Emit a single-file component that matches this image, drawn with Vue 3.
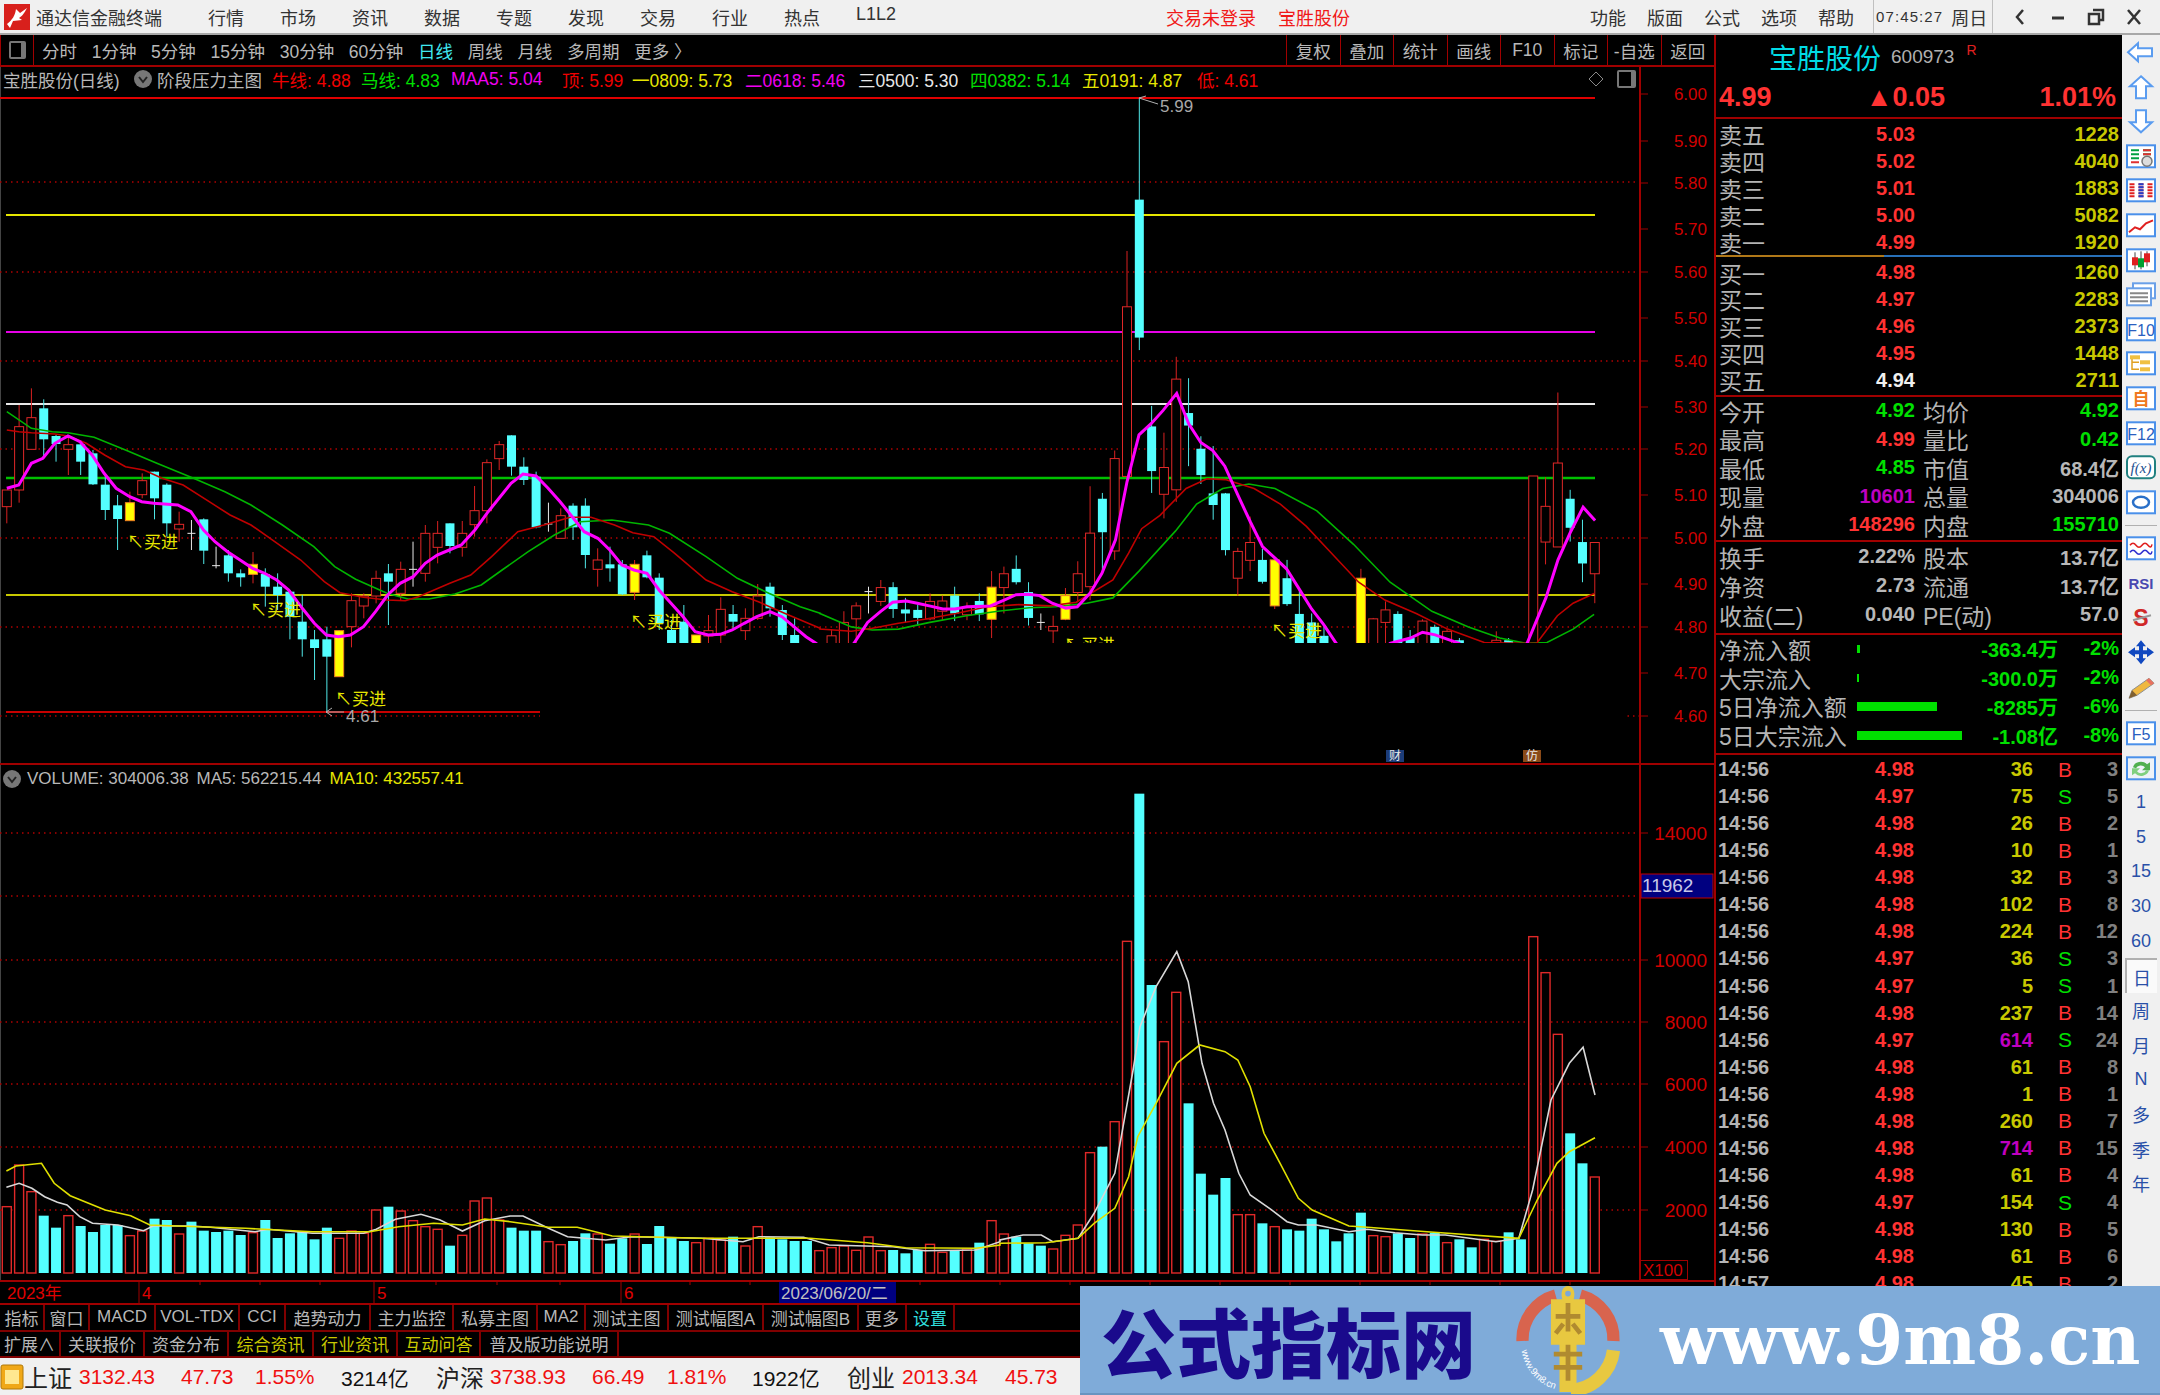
<script setup>
// horizontal pitch of the daily bars
const barX = (i) => 6.8 + 12.31 * i;

// traces were read off two crops, these put them back on the page
const a = (x, y) => [x / 1.912, 360 + y / 3];
const b = (x, y) => [820 + x / 1.912, 80 + y / 2.24];
const ay = (y) => 360 + y / 3;
const by = (y) => 80 + y / 2.24;

// [index, kind, high, top, bottom, low]
const candlesA = [
  [0,"r",390,390,440,490],[1,"r",135,200,390,428],[2,"r",85,173,268,268],[3,"c",118,145,238,290],
  [4,"c",225,228,252,305],[5,"r",225,254,268,345],[6,"c",240,253,305,345],[7,"c",270,280,373,375],
  [8,"c",340,374,450,480],[9,"c",405,436,477,570],[10,"y",395,428,482,482],[11,"r",340,362,404,415],
  [12,"c",335,335,415,478],[13,"c",370,374,490,530],[14,"r",455,493,507,545],[15,"w",480,520,520,570],
  [16,"c",475,478,572,612],[17,"w",560,617,617,625],[18,"c",570,586,640,665],[19,"c",628,640,652,680],
  [20,"y",576,613,643,670],[21,"c",625,642,680,740],[22,"c",640,680,705,750],[23,"c",690,695,770,838],
  [24,"c",705,785,838,890],[25,"c",810,838,864,960],[26,"c",800,838,890,1055],[27,"y",810,812,950,950],
  [28,"r",700,722,800,862],[29,"r",700,708,738,775],[30,"r",632,655,708,730],[31,"c",612,640,665,795],
  [32,"r",605,628,700,720],[33,"w",545,628,628,680],[34,"r",495,520,640,665],[35,"r",483,520,562,610],
  [36,"c",490,490,558,580],[37,"r",483,520,562,590],[38,"r",378,452,494,530],[39,"r",298,308,452,490],
  [40,"r",243,254,296,330],[41,"c",226,226,320,347],[42,"c",292,320,360,375],[43,"c",335,350,502,505],
  [44,"w",428,492,492,515],[45,"r",445,467,535,535],[46,"c",430,437,502,540],[47,"c",415,437,585,625],
  [48,"r",565,600,628,680],[49,"c",560,613,625,665],[50,"c",600,613,703,705],[51,"y",600,613,697,720],
  [52,"c",572,586,652,655],[53,"c",640,653,790,810],[54,"c",780,810,870,890],[55,"c",735,785,870,890],
  [56,"y",825,825,870,890],[57,"r",765,812,828,870],[58,"r",712,748,825,870],[59,"c",735,762,785,810],
  [60,"r",745,775,812,840],[61,"r",672,708,775,780],[62,"c",668,680,745,770],[63,"c",735,750,825,840],
  [64,"c",775,825,870,890],
];
const candlesB = [
  [67,"r",1230,1245,1280,1290],[68,"r",1190,1215,1280,1290],[69,"r",1170,1178,1207,1280],[70,"w",1135,1146,1146,1195],
  [71,"r",1120,1137,1168,1178],[72,"c",1125,1136,1185,1205],[73,"c",1160,1186,1195,1215],[74,"c",1175,1187,1205,1222],
  [75,"r",1150,1168,1207,1210],[76,"r",1155,1167,1190,1210],[77,"c",1135,1155,1195,1212],[78,"r",1170,1182,1198,1210],
  [79,"c",1150,1167,1197,1212],[80,"y",1100,1136,1208,1250],[81,"r",1090,1106,1137,1195],[82,"c",1065,1095,1125,1130],
  [83,"c",1125,1147,1205,1222],[84,"w",1195,1215,1215,1232],[85,"r",1200,1224,1234,1280],[86,"y",1138,1155,1208,1210],
  [87,"r",1078,1106,1148,1170],[88,"r",910,1015,1135,1165],[89,"c",925,938,1013,1100],[90,"r",830,848,1055,1075],
  [91,"r",383,508,888,888],[92,"c",40,268,577,605],[93,"c",730,776,876,925],[94,"r",790,868,928,982],
  [95,"r",620,670,918,945],[96,"c",668,746,774,865],[97,"c",798,826,885,905],[98,"c",820,926,952,985],
  [99,"c",925,926,1053,1065],[100,"r",1048,1056,1116,1155],[101,"r",978,1036,1076,1100],[102,"c",1050,1075,1124,1128],
  [103,"y",1075,1075,1178,1185],[104,"c",1075,1116,1174,1178],[105,"c",1140,1196,1290,1295],[106,"c",1195,1215,1290,1295],
  [107,"c",1225,1245,1290,1295],[110,"y",1095,1116,1290,1295],[111,"r",1205,1207,1290,1295],[112,"r",1168,1187,1215,1290],
  [113,"c",1190,1196,1290,1295],[114,"c",1232,1250,1290,1295],[115,"r",1208,1212,1290,1295],[116,"c",1220,1225,1290,1295],
  [117,"r",1230,1235,1290,1295],[118,"c",1250,1255,1290,1295],[121,"r",1235,1255,1290,1295],[122,"c",1250,1255,1290,1295],
  [124,"r",887,887,1290,1295],[125,"r",890,955,1035,1085],[126,"r",700,858,1046,1046],[127,"c",918,938,1003,1034],
  [128,"c",985,1035,1083,1125],[129,"r",1036,1036,1106,1172],
];
const candles = [
  ...candlesA.map(([i, k, h, t, bt, l]) => ({ i, k, h: ay(h), t: ay(t), b: ay(bt), l: ay(l), x: barX(i) })),
  ...candlesB.map(([i, k, h, t, bt, l]) => ({ i, k, h: by(h), t: by(t), b: by(bt), l: by(l), x: barX(i) })),
];

const poly = (list) => list.map((p) => p.map((n) => n.toFixed(1)).join(",")).join(" ");
const tr = (fn, nums) => {
  const out = [];
  for (let i = 0; i < nums.length; i += 2) out.push(fn(nums[i], nums[i + 1]));
  return out;
};

const magenta = poly([
  ...tr(a, [13,385,36,375,60,310,82,295,105,250,130,228,153,245,176,285,199,340,222,385,248,410,271,425,294,430,340,435,365,455,389,510,411,545,435,575,459,600,483,625,506,640,529,660,552,690,578,745,601,790,624,825,647,830,670,825,695,800,718,755,741,705,765,670,790,650,813,610,836,585,859,570,882,555,908,510,931,460,954,415,977,370,1000,342,1025,348,1048,385,1071,425,1094,470,1117,515,1143,535,1166,570,1189,615,1212,630,1237,640,1260,690,1283,730,1306,770,1329,815,1354,825,1377,823,1400,810,1423,790,1447,770,1472,755,1495,770,1518,800,1541,830,1560,850]),
  ...tr(b, [30,1300,65,1262,91,1215,116,1190,139,1170,165,1167,186,1172,209,1178,235,1185,258,1185,281,1180,326,1178,352,1165,375,1153,398,1152,420,1155,444,1172,470,1183,492,1180,516,1150,539,1105,565,1030,587,900,610,795,633,770,656,740,682,702,705,770,728,812,751,830,774,865,799,930,823,990,846,1045,869,1070,892,1095,916,1140,940,1185,963,1220,987,1262,1040,1320,1090,1262,1129,1250,1152,1237,1176,1243,1222,1262,1290,1320,1352,1262,1388,1160,1411,1075,1434,1015,1459,957,1482,987]),
]);
const maRed = poly([
  ...tr(a, [13,210,36,215,60,218,105,222,130,228,165,250,200,285,240,320,275,330,310,355,350,375,400,425,440,465,480,495,530,550,575,600,620,665,650,698,695,712,740,720,775,722,800,710,860,670,900,645,940,590,990,515,1040,495,1090,472,1130,472,1175,495,1210,518,1250,530,1290,580,1350,660,1400,695,1450,725,1500,760,1568,805]),
  ...tr(b, [0,1230,60,1235,100,1228,150,1217,200,1208,260,1195,320,1180,380,1175,440,1178,490,1170,560,1120,590,1060,615,1005,650,975,700,915,740,893,775,895,830,915,880,950,930,1000,970,1050,1030,1125,1080,1165,1140,1195,1200,1230,1270,1260,1340,1262,1370,1262,1410,1200,1440,1172,1480,1150]),
]);
const maGreen = poly([
  ...tr(a, [13,155,60,205,100,215,130,218,180,232,240,270,300,310,370,355,430,395,480,435,540,495,600,560,640,620,680,658,740,700,780,717,820,717,870,702,920,675,960,630,1010,575,1060,525,1110,485,1170,480,1240,495,1280,520,1350,590,1410,655,1470,700,1530,740,1568,760]),
  ...tr(b, [0,1195,60,1225,100,1232,150,1230,210,1215,280,1200,340,1190,400,1182,450,1180,510,1172,560,1160,610,1100,680,1010,720,950,770,915,820,905,870,915,950,965,1020,1040,1090,1125,1170,1190,1240,1225,1300,1250,1350,1262,1390,1260,1440,1230,1480,1197]),
]);

const levels = [
  { y: 98, x2: 1595, color: "#e00000", w: 2 },
  { y: 215, x2: 1595, color: "#e6e600", w: 2 },
  { y: 332, x2: 1595, color: "#e600e6", w: 2 },
  { y: 404, x2: 1595, color: "#e8e8e8", w: 2 },
  { y: 478, x2: 1595, color: "#00c000", w: 2.5 },
  { y: 595, x2: 1595, color: "#c8c800", w: 2 },
  { y: 712, x2: 540, color: "#c80000", w: 2 },
];
const priceGrid = [182, 272, 361, 449, 538, 627];
const priceAxis = [
  ["6.00", 94], ["5.90", 141], ["5.80", 183], ["5.70", 229], ["5.60", 272],
  ["5.50", 318], ["5.40", 361], ["5.30", 407], ["5.20", 449], ["5.10", 495],
  ["5.00", 538], ["4.90", 584], ["4.80", 627], ["4.70", 673], ["4.60", 716],
];
const buySigns = [[127, 542], [250, 610], [335, 699], [630, 622], [1271, 631], [1064, 645]];

// volume bars, top of each bar from the crops
const volA = "r1310 r1185 r1265 c1337 c1373 r1337 c1368 c1386 c1365 c1365 r1397 r1383 c1346 c1350 r1392 c1355 c1382 c1386 c1382 c1395 r1388 c1350 c1404 c1390 c1385 c1408 c1373 r1405 r1383 r1390 r1320 c1310 r1323 r1352 r1370 r1378 c1427 r1396 r1293 r1284 r1350 c1373 c1382 c1382 r1415 r1424 c1413 c1390 r1392 c1421 c1405 r1392 c1422 c1368 c1402 c1413 r1418 r1405 r1410 c1400 r1428 r1370 c1402 c1408 c1413 c1413 r1442 r1433 r1428 r1441 r1401 r1442 c1440 c1450 c1440 r1423 r1447 c1440 r1437 c1418 r1352";
const volB = "r1392 c1400 c1420 c1427 r1437 r1396 r1365 r1148 c1130 r1055 r514 c71 c645 r815 r667 c1000 c1211 c1274 c1224 r1334 r1334 c1360 r1370 c1378 c1382 c1346 c1378 c1414 c1390 c1328 r1397 r1400 c1390 c1404 r1392 c1388 r1418 c1408 c1432 r1408 r1414 c1387 c1408 r500 r608 r793 c1090 c1180 r1221";
const volBars = (volA + " " + volB).split(" ").map((s, i) => ({
  x: barX(i),
  k: s[0],
  top: 770 + Number(s.slice(1)) / 3,
}));
const volBase = 1273;
const c = (x, y) => [x / 1.568, 770 + y / 3];
const d = (x, y) => [1000 + x / 2.178, 770 + y / 3];
const volWhite = poly([
  ...tr(c, [10,1252,30,1240,50,1255,70,1280,90,1297,105,1305,125,1340,145,1360,185,1365,225,1382,240,1368,300,1368,330,1372,400,1385,420,1378,490,1390,570,1390,590,1378,620,1348,660,1333,690,1350,725,1383,760,1352,800,1338,820,1338,860,1375,890,1400,950,1410,990,1400,1100,1405,1165,1415,1190,1400,1260,1402,1300,1425,1400,1430,1450,1442,1530,1440,1568,1415]),
  ...tr(d, [0,1410,50,1395,90,1395,115,1415,170,1405,205,1330,250,1210,290,900,305,770,340,650,385,545,410,635,440,880,465,1000,490,1080,520,1210,545,1275,590,1318,625,1355,650,1365,690,1365,760,1385,800,1378,860,1388,920,1395,970,1395,1080,1415,1130,1405,1160,1260,1200,990,1240,880,1270,832,1296,975]),
]);
const volYellow = poly([
  ...tr(c, [10,1203,25,1188,65,1180,85,1240,110,1277,165,1320,205,1337,235,1365,310,1370,385,1375,490,1385,580,1385,625,1370,680,1360,725,1365,760,1347,800,1355,860,1372,905,1372,960,1398,1100,1405,1270,1405,1360,1418,1420,1433,1530,1435,1568,1425]),
  ...tr(d, [0,1420,100,1418,170,1405,205,1360,250,1315,280,1220,300,1100,340,1000,385,880,435,825,490,845,518,870,545,950,575,1090,610,1180,650,1285,680,1320,760,1368,800,1372,930,1385,1130,1405,1170,1290,1213,1180,1240,1145,1296,1103]),
]);
const volGrid = [833, 896, 960, 1022, 1084, 1147, 1210];
const volAxis = [["14000", 833], ["10000", 960], ["8000", 1022], ["6000", 1084], ["4000", 1147], ["2000", 1210]];

const menus = ["行情", "市场", "资讯", "数据", "专题", "发现", "交易", "行业", "热点", "L1L2"];
const periods = ["分时", "1分钟", "5分钟", "15分钟", "30分钟", "60分钟", "日线", "周线", "月线", "多周期"];
const chartBtns = ["复权", "叠加", "统计", "画线", "F10", "标记", "-自选", "返回"];

const legend = [
  { t: "牛线: 4.88", c: "#f00000", w: 89 },
  { t: "马线: 4.83", c: "#00e000", w: 90 },
  { t: "MAA5: 5.04", c: "#f000f0", w: 111 },
  { t: "顶: 5.99", c: "#f00000", w: 70 },
  { t: "一0809: 5.73", c: "#e6e600", w: 113 },
  { t: "二0618: 5.46", c: "#f000f0", w: 113 },
  { t: "三0500: 5.30", c: "#e8e8e8", w: 112 },
  { t: "四0382: 5.14", c: "#00e000", w: 112 },
  { t: "五0191: 4.87", c: "#e6e600", w: 115 },
  { t: "低: 4.61", c: "#f00000", w: 70 },
];

const sell = [["卖五","5.03","1228"],["卖四","5.02","4040"],["卖三","5.01","1883"],["卖二","5.00","5082"],["卖一","4.99","1920"]];
const buy = [["买一","4.98","1260"],["买二","4.97","2283"],["买三","4.96","2373"],["买四","4.95","1448"],["买五","4.94","2711"]];
const R = "#ff3232", G = "#00e000", W = "#b8b8b8", P = "#c000c0";
const stats1 = [
  ["今开","4.92",G,"均价","4.92",G],["最高","4.99",R,"量比","0.42",G],["最低","4.85",G,"市值","68.4亿",W],
  ["现量","10601",P,"总量","304006",W],["外盘","148296",R,"内盘","155710",G],
];
const stats2 = [
  ["换手","2.22%",W,"股本","13.7亿",W],["净资","2.73",W,"流通","13.7亿",W],["收益(二)","0.040",W,"PE(动)","57.0",W],
];
const flows = [
  ["净流入额",3,8,"-363.4万","-2%"],["大宗流入",2,8,"-300.0万","-2%"],
  ["5日净流入额",80,9,"-8285万","-6%"],["5日大宗流入",105,9,"-1.08亿","-8%"],
];
const ticks = [
  ["14:56","4.98","36","B","3"],["14:56","4.97","75","S","5"],["14:56","4.98","26","B","2"],["14:56","4.98","10","B","1"],
  ["14:56","4.98","32","B","3"],["14:56","4.98","102","B","8"],["14:56","4.98","224","B","12"],["14:56","4.97","36","S","3"],
  ["14:56","4.97","5","S","1"],["14:56","4.98","237","B","14"],["14:56","4.97","614","S","24"],["14:56","4.98","61","B","8"],
  ["14:56","4.98","1","B","1"],["14:56","4.98","260","B","7"],["14:56","4.98","714","B","15"],["14:56","4.98","61","B","4"],
  ["14:56","4.97","154","S","4"],["14:56","4.98","130","B","5"],["14:56","4.98","61","B","6"],["14:57","4.98","45","B","2"],
];

const row1 = [
  ["指标",45],["窗口",45],["MACD",66],["VOL-TDX",84],["CCI",46],["趋势动力",85],["主力监控",83],["私募主图",84],
  ["MA2",48],["测试主图",83],["测试幅图A",95],["测试幅图B",95],["更多",48],["设置",48,"cyan"],
];
const row2 = [
  ["扩展∧",61],["关联报价",84],["资金分布",84],["综合资讯",85,"yel"],["行业资讯",84,"yel"],["互动问答",83,"yel"],["普及版功能说明",138],
];
const status = [
  { t: "上证", w: 55, k: "lbl" },{ t: "3132.43", w: 102, k: "red" },{ t: "47.73", w: 74, k: "red" },{ t: "1.55%", w: 86, k: "red" },
  { t: "3214亿", w: 95, k: "blk" },{ t: "沪深", w: 54, k: "lbl" },{ t: "3738.93", w: 102, k: "red" },{ t: "66.49", w: 75, k: "red" },
  { t: "1.81%", w: 85, k: "red" },{ t: "1922亿", w: 95, k: "blk" },{ t: "创业", w: 55, k: "lbl" },{ t: "2013.34", w: 103, k: "red" },{ t: "45.73", w: 70, k: "red" },
];

const box = '<rect x="2" y="2" width="28" height="22" fill="#fff" stroke="#4a90ea" stroke-width="2"/>';
const tool = [
  '<path d="M3 13 13 4V9H27V17H13V22Z" fill="#fff" stroke="#5a9cf0" stroke-width="2"/>',
  '<path d="M16 2 27 12H21V24H11V12H5Z" fill="#fff" stroke="#5a9cf0" stroke-width="2"/>',
  '<path d="M16 24 27 14H21V2H11V14H5Z" fill="#fff" stroke="#5a9cf0" stroke-width="2"/>',
  box + '<path d="M6 7h8M6 11h8M6 15h8M18 7h8M18 11h8" stroke="#00a040" stroke-width="2"/><path d="M18 7h8M18 11h8M6 19h8" stroke="#e03030" stroke-width="2"/><circle cx="22" cy="18" r="5" fill="#ddd" stroke="#777" stroke-width="1.5"/>',
  box + '<path d="M7 6v14M16 6v14M25 6v14" stroke="#e02020" stroke-width="5" stroke-dasharray="2 1"/><path d="M16 6v14" stroke="#2040d0" stroke-width="5" stroke-dasharray="2 1"/>',
  box + '<path d="M4 20 10 15 15 17 21 11 28 8" fill="none" stroke="#e02020" stroke-width="2"/>',
  box + '<path d="M10 5v17M16 4v18M22 4v15" stroke="#444" stroke-width="1"/><rect x="7" y="10" width="6" height="8" fill="#e02020"/><rect x="13" y="11" width="6" height="9" fill="#00a030"/><rect x="19" y="6" width="6" height="9" fill="#e02020"/>',
  '<rect x="8" y="2" width="22" height="15" fill="#fff" stroke="#6aa0e8" stroke-width="2"/><rect x="2" y="7" width="24" height="17" fill="#fff" stroke="#6aa0e8" stroke-width="2"/><path d="M5 12h18M5 16h18M5 20h18" stroke="#888" stroke-width="2"/>',
  box + '<text x="16" y="20" text-anchor="middle" font-size="16" fill="#2a60c0" font-family="Liberation Sans">F10</text>',
  box + '<path d="M7 7V19H14M7 12H14" fill="none" stroke="#e0a020" stroke-width="1.5"/><rect x="5" y="5" width="10" height="4" fill="#f0c040"/><rect x="15" y="10" width="10" height="4" fill="#f0c040"/><rect x="15" y="17" width="10" height="4" fill="#f0c040"/>',
  box + '<text x="16" y="20" text-anchor="middle" font-size="17" fill="#f07820" font-weight="700" font-family="Noto Sans CJK SC">自</text>',
  box + '<text x="16" y="20" text-anchor="middle" font-size="16" fill="#2a60c0" font-family="Liberation Sans">F12</text>',
  '<rect x="2" y="2" width="28" height="22" rx="5" fill="#fff" stroke="#208080" stroke-width="2"/><text x="16" y="19" text-anchor="middle" font-size="15" fill="#205090" font-style="italic" font-family="Liberation Serif">f(x)</text>',
  box + '<ellipse cx="16" cy="13" rx="8" ry="5.5" fill="none" stroke="#2a70c8" stroke-width="2.5"/>',
  "sep",
  box + '<path d="M5 10q3-4 6 0t6 0 6 0 4-1" fill="none" stroke="#e02020" stroke-width="1.5"/><path d="M5 17q3-4 6 0t6 0 6 0 4-1" fill="none" stroke="#3030d0" stroke-width="1.5"/>',
  '<text x="16" y="19" text-anchor="middle" font-size="15" font-weight="700" fill="#4848b0" font-family="Liberation Sans">RSI</text>',
  '<text x="16" y="21" text-anchor="middle" font-size="23" font-weight="700" fill="#d02828" font-family="Liberation Sans">S</text><path d="M8 15 26 10" stroke="#999" stroke-width="2"/>',
  '<path d="M16 1 21 7H18V11H22V8L29 13 22 18V15H18V19H21L16 25 11 19H14V15H10V18L3 13 10 8V11H14V7H11Z" fill="#1048c0"/>',
  '<path d="M4 24 7 16 24 4 29 9 12 21Z" fill="#f0b840" stroke="#909090" stroke-width="1"/><path d="M4 24 7 16 12 21Z" fill="#806030"/><path d="M24 4 29 9 26 11 21 6Z" fill="#e87060"/>',
  "sep",
  box + '<text x="16" y="20" text-anchor="middle" font-size="16" fill="#2a60c0" font-family="Liberation Sans">F5</text>',
  '<rect x="2" y="2" width="28" height="22" fill="#eef2f8" stroke="#4a90ea" stroke-width="2"/><path d="M8 12a8 7 0 0 1 14-3l3-2v8h-8l3-3a5 4 0 0 0-9 1Z" fill="#50b050"/><path d="M24 15a8 7 0 0 1-14 3l-3 2v-7h8l-3 3a5 4 0 0 0 9-1Z" fill="#80d080"/>',
];
const periodsSide = ["1", "5", "15", "30", "60", "日", "周", "月", "N", "多", "季", "年"];
</script>

<template>
  <div class="app">
    <header class="titlebar">
      <svg class="logo" viewBox="0 0 26 26">
        <rect width="26" height="26" fill="#d8201c" />
        <path d="M3 20C8 16 11 12 12 5L16 9 23 4C20 10 17 13 15 14L18 16 9 17 6 24Z" fill="#fff" />
      </svg>
      <span class="app-name">通达信金融终端</span>
      <nav class="menu">
        <span v-for="m in menus" :key="m" class="menu-item">{{ m }}</span>
      </nav>
      <span class="login">交易未登录</span>
      <span class="login stock">宝胜股份</span>
      <nav class="menu-right">
        <span>功能</span><span>版面</span><span>公式</span><span>选项</span><span>帮助</span>
      </nav>
      <div class="clock"><span class="time">07:45:27</span><span>周日</span></div>
      <div class="win-btns">
        <svg viewBox="0 0 20 20"><path d="M13 3 7 10 13 17" fill="none" stroke="#333" stroke-width="2.5" /></svg>
        <svg viewBox="0 0 20 20"><path d="M4 11H16" stroke="#333" stroke-width="3" /></svg>
        <svg viewBox="0 0 20 20"><path d="M7 3H17V13H14M3 7H13V17H3Z" fill="none" stroke="#333" stroke-width="2.5" /></svg>
        <svg viewBox="0 0 20 20"><path d="M4 3 16 17M16 3 4 17" stroke="#333" stroke-width="2.5" /></svg>
      </div>
    </header>

    <div class="body">
      <section class="left">
        <div class="toolbar">
          <div class="side-toggle"><i></i></div>
          <div class="periods">
            <span v-for="p in periods" :key="p" :class="{ active: p === '日线' }">{{ p }}</span>
            <span>更多 〉</span>
          </div>
          <div class="chart-btns">
            <span v-for="b2 in chartBtns" :key="b2">{{ b2 }}</span>
          </div>
        </div>

        <div class="price-pane">
          <div class="legend">
            <span class="leg-name">宝胜股份(日线)</span>
            <svg class="round" viewBox="0 0 18 18">
              <circle cx="9" cy="9" r="9" fill="#777" />
              <path d="M5 7 9 12 13 7" fill="none" stroke="#222" stroke-width="2" />
            </svg>
            <span class="leg-main">阶段压力主图</span>
            <span
              v-for="l in legend"
              :key="l.t"
              class="leg-item"
              :style="{ color: l.c, width: l.w + 'px' }"
            >{{ l.t }}</span>
            <svg class="leg-diamond" viewBox="0 0 18 18"><path d="M9 2 16 9 9 16 2 9Z" fill="none" stroke="#888" /></svg>
            <span class="leg-box"></span>
          </div>
          <svg class="chart" width="1714" height="696" viewBox="0 67 1714 696">
            <path d="M0.5 67V763" stroke="#444" />
            <line v-for="y in priceGrid" :key="y" x1="0" :x2="1640" :y1="y" :y2="y" class="dots" />
            <line x1="0" x2="540" y1="716" y2="716" class="dots" />
            <line x1="1622" x2="1640" y1="716" y2="716" class="dots" />

            <line
              v-for="l in levels"
              :key="l.y"
              :x1="l.y === 98 ? 0 : 6"
              :x2="l.x2"
              :y1="l.y"
              :y2="l.y"
              :stroke="l.color"
              :stroke-width="l.w"
            />

            <g v-for="k in candles" :key="k.i">
              <template v-if="k.k === 'w'">
                <line :x1="k.x" :x2="k.x" :y1="k.h" :y2="k.l" stroke="#e8e8e8" />
                <line :x1="k.x - 4" :x2="k.x + 4" :y1="k.t" :y2="k.t" stroke="#e8e8e8" />
              </template>
              <template v-else>
                <line
                  :x1="k.x"
                  :x2="k.x"
                  :y1="k.h"
                  :y2="k.l"
                  :stroke="k.k === 'c' ? '#50e8e8' : '#d82020'"
                />
                <rect
                  :x="k.x - 4.5"
                  :y="k.t"
                  width="9"
                  :height="k.b - k.t"
                  :fill="k.k === 'c' ? '#54ffff' : k.k === 'y' ? '#ffff00' : '#000'"
                  :stroke="k.k === 'c' ? 'none' : k.k === 'y' ? '#f08020' : '#e02828'"
                />
              </template>
            </g>

            <polyline :points="maGreen" class="line" stroke="#00b400" stroke-width="1.6" />
            <polyline :points="maRed" class="line" stroke="#c00000" stroke-width="1.6" />
            <polyline :points="magenta" class="line" stroke="#ff00ff" stroke-width="3" />

            <text v-for="s in buySigns" :key="s[0]" :x="s[0]" :y="s[1] + 6" class="sign">↖买进</text>

            <rect x="655" y="643" width="970" height="106" fill="#000" />

            <path d="M326 712H344M332 708 326 712 332 716" fill="none" stroke="#b0b0b0" />
            <text x="346" y="722" class="mark">4.61</text>
            <path d="M1139 98 1158 104M1139 98 1146 96" fill="none" stroke="#b0b0b0" />
            <text x="1160" y="112" class="mark">5.99</text>

            <rect x="1386" y="750" width="18" height="12" fill="#1c3c78" />
            <text x="1395" y="760" class="badge">财</text>
            <rect x="1523" y="750" width="18" height="12" fill="#8a4a18" />
            <text x="1532" y="760" class="badge">仿</text>

            <path d="M1640 67V763" stroke="#a00000" stroke-width="2" />
            <g v-for="t in priceAxis" :key="t[0]">
              <path :d="`M1640 ${t[1]}H1648`" stroke="#a00000" />
              <text x="1707" :y="t[1] + 6" class="axis">{{ t[0] }}</text>
            </g>
          </svg>
        </div>

        <div class="vol-pane">
          <div class="legend vol-legend">
            <svg class="round" viewBox="0 0 18 18">
              <circle cx="9" cy="9" r="9" fill="#777" />
              <path d="M5 7 9 12 13 7" fill="none" stroke="#222" stroke-width="2" />
            </svg>
            <span class="vol-a">VOLUME: 304006.38</span>
            <span class="vol-a">MA5: 562215.44</span>
            <span class="vol-b">MA10: 432557.41</span>
          </div>
          <svg class="chart" width="1714" height="515" viewBox="0 765 1714 515">
            <path d="M0.5 765V1280" stroke="#444" />
            <line v-for="y in volGrid" :key="y" x1="0" x2="1640" :y1="y" :y2="y" class="dots" />
            <template v-for="(v, i) in volBars" :key="i">
              <rect
                v-if="v.k === 'c'"
                :x="v.x - 5"
                :y="v.top"
                width="10"
                :height="volBase - v.top"
                fill="#54ffff"
              />
              <rect
                v-else
                :x="v.x - 4.5"
                :y="v.top"
                width="9"
                :height="volBase - v.top"
                fill="#000"
                stroke="#e02828"
                stroke-width="1.4"
              />
            </template>
            <polyline :points="volWhite" class="line" stroke="#d8d8d8" stroke-width="1.6" />
            <polyline :points="volYellow" class="line" stroke="#e0e000" stroke-width="1.6" />

            <path d="M1640 765V1280" stroke="#a00000" stroke-width="2" />
            <g v-for="t in volAxis" :key="t[0]">
              <path :d="`M1640 ${t[1]}H1648`" stroke="#a00000" />
              <text x="1707" :y="t[1] + 7" class="axis big">{{ t[0] }}</text>
            </g>
            <rect x="1641" y="874" width="72" height="24" fill="#000080" stroke="#c00000" />
            <text x="1642" y="892" class="cross">11962</text>
            <rect x="1640.5" y="1260.5" width="47" height="19" fill="none" stroke="#a00000" />
            <text x="1643" y="1276" class="x100">X100</text>
          </svg>
        </div>

        <svg class="date-axis" width="1714" height="21" viewBox="0 1282 1714 21">
          <g v-for="x in [139, 374, 621]" :key="x">
            <path :d="`M${x} 1282V1303`" stroke="#a00000" />
          </g>
          <path d="M200 1282v3M260 1282v3M320 1282v3M436 1282v3M497 1282v3M560 1282v3M690 1282v3M750 1282v3M920 1282v3M1000 1282v3M1070 1282v3M1150 1282v3M1220 1282v3M1290 1282v3M1360 1282v3M1430 1282v3M1500 1282v3M1570 1282v3" stroke="#a00000" />
          <text x="7" y="1299" class="date">2023年</text>
          <text x="142" y="1299" class="date">4</text>
          <text x="377" y="1299" class="date">5</text>
          <text x="624" y="1299" class="date">6</text>
          <rect x="779" y="1282" width="117" height="21" fill="#000080" />
          <text x="781" y="1299" class="date-on">2023/06/20/二</text>
        </svg>

        <div class="btn-row">
          <span
            v-for="r in row1"
            :key="r[0]"
            class="cell"
            :class="r[2]"
            :style="{ width: r[1] + 'px' }"
          >{{ r[0] }}</span>
        </div>
        <div class="btn-row">
          <span
            v-for="r in row2"
            :key="r[0]"
            class="cell"
            :class="r[2]"
            :style="{ width: r[1] + 'px' }"
          >{{ r[0] }}</span>
        </div>
      </section>

      <section class="quote">
        <div class="q-name">
          <span class="q-title">宝胜股份</span>
          <span class="q-code">600973</span>
          <sup class="q-r">R</sup>
        </div>
        <div class="q-price">
          <span>4.99</span>
          <span>▲0.05</span>
          <span>1.01%</span>
        </div>

        <div class="q-book sell-book">
          <div v-for="s in sell" :key="s[0]" class="book-row">
            <span class="lbl">{{ s[0] }}</span>
            <span class="num red">{{ s[1] }}</span>
            <span class="num yel">{{ s[2] }}</span>
          </div>
        </div>
        <div class="book-split"><i></i><b></b></div>
        <div class="q-book buy-book">
          <div v-for="s in buy" :key="s[0]" class="book-row">
            <span class="lbl">{{ s[0] }}</span>
            <span class="num" :class="s[0] === '买五' ? 'white' : 'red'">{{ s[1] }}</span>
            <span class="num yel">{{ s[2] }}</span>
          </div>
        </div>

        <div class="q-stats stats-a line-top">
          <div v-for="s in stats1" :key="s[0]" class="stat-row">
            <span class="lbl">{{ s[0] }}</span>
            <span class="num" :style="{ color: s[2] }">{{ s[1] }}</span>
            <span class="lbl second">{{ s[3] }}</span>
            <span class="num" :style="{ color: s[5] }">{{ s[4] }}</span>
          </div>
        </div>
        <div class="q-stats stats-b line-top">
          <div v-for="s in stats2" :key="s[0]" class="stat-row">
            <span class="lbl">{{ s[0] }}</span>
            <span class="num" :style="{ color: s[2] }">{{ s[1] }}</span>
            <span class="lbl second">{{ s[3] }}</span>
            <span class="num" :style="{ color: s[5] }">{{ s[4] }}</span>
          </div>
        </div>

        <div class="q-flows line-top">
          <div v-for="f in flows" :key="f[0]" class="flow-row">
            <span class="lbl">{{ f[0] }}</span>
            <span class="flow-bar"><i :style="{ width: f[1] + 'px', height: f[2] + 'px' }"></i></span>
            <span class="num green">{{ f[3] }}</span>
            <span class="num green">{{ f[4] }}</span>
          </div>
        </div>

        <div class="q-ticks line-top">
          <div v-for="(t, i) in ticks" :key="i" class="tick-row">
            <span class="num gray">{{ t[0] }}</span>
            <span class="num red">{{ t[1] }}</span>
            <span class="num" :class="Number(t[2]) > 500 ? 'purple' : 'yel'">{{ t[2] }}</span>
            <span class="flag" :class="t[3] === 'B' ? 'red' : 'green'">{{ t[3] }}</span>
            <span class="num dim">{{ t[4] }}</span>
          </div>
        </div>
      </section>

      <aside class="tools">
        <template v-for="(ic, i) in tool" :key="i">
          <div v-if="ic === 'sep'" class="tool-sep"></div>
          <svg v-else class="tool" viewBox="0 0 32 26" v-html="ic"></svg>
        </template>
        <span
          v-for="p in periodsSide"
          :key="p"
          class="tool-text"
          :class="{ pressed: p === '日' }"
        >{{ p }}</span>
      </aside>
    </div>

    <footer class="status">
      <svg class="status-ico" viewBox="0 0 24 28">
        <rect x="1" y="2" width="22" height="24" rx="2" fill="#f0a818" stroke="#b07808" />
        <rect x="5" y="7" width="14" height="14" fill="#ffe890" />
      </svg>
      <span
        v-for="s in status"
        :key="s.t"
        class="st"
        :class="s.k"
        :style="{ width: s.w + 'px' }"
      >{{ s.t }}</span>
    </footer>

    <div class="banner">
      <span class="ban-cn">公式指标网</span>
      <svg class="ban-logo" viewBox="0 0 110 114">
        <path d="M7 58A48 48 0 0 1 42 10" fill="none" stroke="#d8644e" stroke-width="13" />
        <path d="M68 10A48 48 0 0 1 103 58" fill="none" stroke="#d8644e" stroke-width="13" />
        <path d="M103 68A48 48 0 0 1 58 110" fill="none" stroke="#e8c840" stroke-width="14" />
        <path d="M55 0C49 0 47 7 49 14H37V62H46V112H64V62H73V14H61C63 7 61 0 55 0Z" fill="#e8c840" />
        <circle cx="55" cy="8" r="3" fill="#7ca8d8" />
        <path d="M42 32H68M55 18V48M42 50 50 40M68 50 60 40M40 72H70M40 86H70M55 62V100" stroke="#b08a30" stroke-width="5" fill="none" />
        <defs><path id="ban-arc" d="M6 68A50 50 0 0 0 46 110" /></defs>
        <text class="ban-small"><textPath href="#ban-arc">www.9m8.cn</textPath></text>
      </svg>
      <span class="ban-url">www.9m8.cn</span>
    </div>
  </div>
</template>

<style>
html,
body {
  margin: 0;
  background: #000;
}
</style>

<style scoped>
.app {
  position: relative;
  width: 2160px;
  height: 1395px;
  overflow: hidden;
  display: flex;
  flex-direction: column;
  background: #000;
  color: #b8b8b8;
  font-family: "Liberation Sans", "Noto Sans CJK SC", sans-serif;
}

.titlebar {
  height: 33px;
  flex: none;
  display: flex;
  align-items: center;
  background: #f0f0f0;
  border-bottom: 2px solid #a8a8a8;
  color: #333;
  font-size: 18px;
}
.logo {
  width: 26px;
  height: 26px;
  margin-left: 4px;
}
.app-name {
  margin-left: 6px;
  white-space: nowrap;
}
.menu {
  display: flex;
  gap: 36px;
  margin-left: 46px;
}
.menu-item {
  white-space: nowrap;
}
.login {
  color: #f01818;
  margin-left: 270px;
  white-space: nowrap;
}
.login.stock {
  margin-left: 22px;
}
.menu-right {
  display: flex;
  gap: 21px;
  margin-left: 240px;
}
.clock {
  display: flex;
  align-items: center;
  gap: 8px;
  height: 33px;
  margin-left: 19px;
  padding: 0 5px 0 2px;
  border-left: 1px solid #c0c0c0;
  border-right: 1px solid #c0c0c0;
}
.time {
  font-size: 15px;
  letter-spacing: 1.1px;
}
.win-btns {
  display: flex;
  gap: 18px;
  margin-left: 17px;
}
.win-btns svg {
  width: 20px;
  height: 20px;
}

.body {
  height: 1323px;
  flex: none;
  display: flex;
}
.left {
  width: 1716px;
  flex: none;
  border-right: 2px solid #a00000;
  box-sizing: border-box;
}

.toolbar {
  height: 30px;
  display: flex;
  border-bottom: 2px solid #a00000;
  font-size: 17.5px;
}
.side-toggle {
  width: 34px;
  border-right: 1px solid #a00000;
  border-left: 1px solid #a00000;
  box-sizing: border-box;
  display: flex;
  align-items: center;
  justify-content: center;
}
.side-toggle i {
  width: 10px;
  height: 14px;
  border: 2px solid #777;
  border-right-width: 5px;
  border-radius: 2px;
}
.periods {
  display: flex;
  align-items: center;
  gap: 14.7px;
  margin-left: 8px;
  white-space: nowrap;
}
.periods .active {
  color: #40e8f0;
}
.chart-btns {
  margin-left: auto;
  display: flex;
}
.chart-btns span {
  width: 52.5px;
  display: flex;
  align-items: center;
  justify-content: center;
  border-left: 1px solid #a00000;
  white-space: nowrap;
}

.price-pane,
.vol-pane {
  position: relative;
  border-bottom: 2px solid #a00000;
}
.price-pane {
  height: 696px;
}
.vol-pane {
  height: 515px;
}
.chart {
  display: block;
}
.legend {
  position: absolute;
  left: 3px;
  top: -3px;
  width: 1636px;
  height: 30px;
  display: flex;
  align-items: center;
  font-size: 17.5px;
  white-space: nowrap;
}
.leg-name {
  width: 131px;
}
.round {
  width: 18px;
  height: 18px;
  flex: none;
  margin-right: 5px;
}
.leg-main {
  width: 115px;
}
.leg-item {
  flex: none;
}
.leg-diamond {
  width: 18px;
  height: 18px;
  margin-left: 320px;
  flex: none;
}
.leg-box {
  width: 12px;
  height: 14px;
  margin-left: 12px;
  border: 2px solid #777;
  border-right-width: 5px;
  border-radius: 2px;
}
.vol-legend {
  top: -1px;
  left: 3px;
  height: 30px;
  font-size: 17px;
}
.vol-legend .round {
  margin-right: 6px;
}
.vol-a {
  color: #b8b8b8;
  margin-right: 8px;
}
.vol-b {
  color: #e6e600;
}

.dots {
  stroke: #b00000;
  stroke-width: 1.5;
  stroke-dasharray: 1.5 4;
}
.line {
  fill: none;
}
.sign {
  fill: #e6e600;
  font-size: 17px;
}
.mark {
  fill: #a8a8a8;
  font-size: 17px;
}
.badge {
  fill: #e8e8e8;
  font-size: 12px;
  text-anchor: middle;
}
.axis {
  fill: #d00000;
  font-size: 17px;
  text-anchor: end;
}
.axis.big {
  font-size: 19px;
}
.cross {
  fill: #c8c8e8;
  font-size: 19px;
}
.x100 {
  fill: #d00000;
  font-size: 17px;
}

.date-axis {
  display: block;
  border-bottom: 2px solid #a00000;
}
.date {
  fill: #e00000;
  font-size: 17px;
}
.date-on {
  fill: #c0c0c0;
  font-size: 17px;
}

.btn-row {
  height: 24.5px;
  display: flex;
  border-bottom: 2px solid #800000;
  font-size: 17px;
}
.cell {
  box-sizing: border-box;
  display: flex;
  align-items: center;
  justify-content: center;
  border-right: 2px solid #800000;
  white-space: nowrap;
}
.cell.cyan {
  color: #30e0e0;
}
.cell.yel {
  color: #c8c800;
}

.quote {
  width: 406px;
  flex: none;
  display: flex;
  flex-direction: column;
  overflow: hidden;
}
.q-name {
  height: 43px;
  flex: none;
  display: flex;
  align-items: center;
  padding-left: 53px;
}
.q-title {
  color: #00dce6;
  font-size: 28px;
}
.q-code {
  font-size: 19px;
  margin-left: 10px;
  color: #b0b0b0;
}
.q-r {
  color: #e02020;
  font-size: 14px;
  margin: -14px 0 0 12px;
}
.q-price {
  height: 41px;
  flex: none;
  display: flex;
  align-items: center;
  justify-content: space-between;
  padding: 0 6px 0 3px;
  box-sizing: border-box;
  color: #ff3232;
  font-size: 27px;
  font-weight: 700;
  border-bottom: 2px solid #a00000;
}
.lbl {
  font-size: 23px;
  color: #b4b4b4;
  white-space: nowrap;
}
.num {
  font-size: 20px;
  font-weight: 700;
  text-align: right;
  white-space: nowrap;
}
.red {
  color: #ff3232;
}
.yel {
  color: #c8c800;
}
.white {
  color: #f0f0f0;
}
.green {
  color: #00e000;
}
.purple {
  color: #c000c0;
}
.gray {
  color: #b4b4b4;
  text-align: left;
}
.dim {
  color: #808080;
}

.q-book {
  flex: none;
  padding: 0 3px;
}
.sell-book {
  height: 135.5px;
}
.sell-book .book-row {
  height: 27.1px;
  position: relative;
  top: -2px;
}
.buy-book {
  height: 138px;
}
.buy-book .book-row {
  position: relative;
  top: -1px;
}
.book-row {
  height: 26.9px;
  display: grid;
  grid-template-columns: 80px 116px 204px;
  align-items: center;
}
.book-split {
  flex: none;
  display: flex;
  height: 2px;
}
.book-split i {
  width: 168px;
  background: #b07818;
}
.book-split b {
  flex: 1;
  background: #2870b8;
}
.line-top {
  border-top: 2px solid #a00000;
}
.q-stats {
  flex: none;
  padding: 0 3px;
}
.stats-a {
  height: 143px;
}
.stats-a .stat-row {
  position: relative;
  top: -3px;
}
.stats-b {
  height: 91.5px;
}
.stats-b .stat-row {
  height: 28.9px;
  position: relative;
  top: -1.75px;
}
.stat-row {
  height: 28.6px;
  display: grid;
  grid-template-columns: 80px 116px 60px 144px;
  align-items: center;
}
.second {
  padding-left: 8px;
}
.q-flows {
  flex: none;
  height: 118px;
  padding: 0 3px;
}
.flow-row {
  height: 28.9px;
  position: relative;
  top: -3.3px;
  display: grid;
  grid-template-columns: 138px 120px 81px 61px;
  align-items: center;
}
.flow-bar {
  display: flex;
  align-items: center;
}
.flow-bar i {
  background: #00e000;
}
.q-ticks {
  flex: none;
  padding: 1px 4px 0 2px;
}
.tick-row {
  height: 27.07px;
  display: grid;
  grid-template-columns: 60px 136px 119px 45px 40px;
  align-items: center;
}
.flag {
  font-size: 21px;
  padding-left: 25px;
}

.tools {
  flex: 1;
  background: #f0f0f0;
  display: flex;
  flex-direction: column;
  align-items: center;
}
.tool {
  width: 32px;
  height: 26px;
  flex: none;
  padding: 4.3px 0;
  box-sizing: content-box;
}
.tool-sep {
  width: 32px;
  height: 0;
  flex: none;
  margin: 5.5px 0;
  border-top: 1px solid #b0b0b0;
}
.tool-text {
  width: 32px;
  height: 34.6px;
  flex: none;
  display: flex;
  align-items: center;
  justify-content: center;
  color: #2a50a8;
  font-size: 18px;
}
.tool-text.pressed {
  background: #fafafa;
  border-top: 2px solid #b0b0b0;
  border-left: 2px solid #b0b0b0;
  box-sizing: border-box;
}

.status {
  height: 37px;
  flex: none;
  display: flex;
  align-items: center;
  background: #f0f0f0;
  font-size: 21px;
}
.status-ico {
  width: 24px;
  height: 28px;
  flex: none;
}
.st {
  flex: none;
  white-space: nowrap;
}
.st.lbl {
  color: #222;
  font-size: 24px;
}
.st.red {
  color: #f01010;
}
.st.blk {
  color: #111;
}

.banner {
  position: absolute;
  left: 1080px;
  top: 1286px;
  width: 1080px;
  height: 109px;
  display: flex;
  align-items: center;
  background: #7fabd9;
  border-bottom: 2px solid #6a94c0;
  box-sizing: border-box;
}
.ban-cn {
  margin-left: 21px;
  width: 383px;
  color: #1a0a8c;
  font-size: 75px;
  font-weight: 900;
  line-height: 1;
  white-space: nowrap;
  font-family: "Noto Sans CJK SC", sans-serif;
}
.ban-logo {
  width: 110px;
  height: 108px;
  margin-left: 29px;
  flex: none;
}
.ban-small {
  fill: #fff;
  font-size: 10px;
}
.ban-url {
  margin-left: 37px;
  color: #fff;
  font-size: 69px;
  font-weight: 700;
  white-space: nowrap;
  font-family: "DejaVu Serif", serif;
}
</style>
